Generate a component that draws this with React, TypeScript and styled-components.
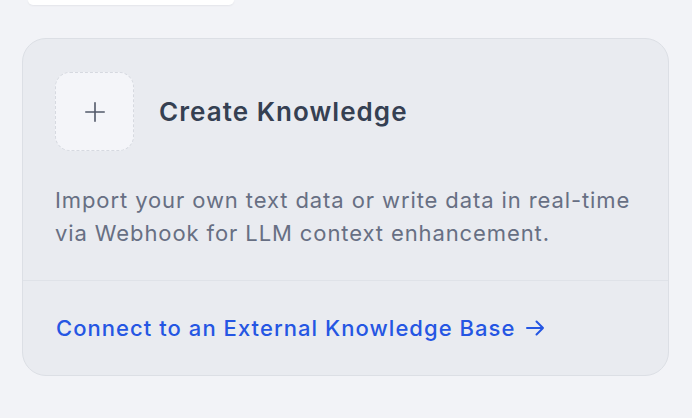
import React from "react";
import styled, { createGlobalStyle } from "styled-components";

const GlobalStyle = createGlobalStyle`
  html, body {
    margin: 0;
    padding: 0;
    background: #f2f3f7;
    font-family: Inter, "Noto Sans", sans-serif;
    -webkit-font-smoothing: antialiased;
  }
`;

const Page = styled.div`
  width: 692px;
  height: 418px;
  box-sizing: border-box;
  padding: 0 23px 0 22px;
  display: flex;
  flex-direction: column;
  gap: 33px;
  overflow: hidden;
`;

const PrevCard = styled.div`
  margin-left: 6px;
  width: 206px;
  height: 5px;
  background: #ffffff;
  border-radius: 0 0 12px 12px;
  box-shadow: 0 1px 2px rgba(16, 24, 40, 0.06);
`;

const Card = styled.div`
  height: 338px;
  box-sizing: border-box;
  background: #e9ebf0;
  border: 1px solid #dcdfe5;
  border-radius: 24px;
  display: flex;
  flex-direction: column;
`;

const Body = styled.div`
  padding: 33px 32px 30px 32px;
  display: flex;
  flex-direction: column;
  gap: 33px;
`;

const Header = styled.div`
  display: flex;
  align-items: center;
  gap: 25px;
`;

const IconBox = styled.div`
  width: 79px;
  height: 79px;
  box-sizing: border-box;
  border: 1.5px dashed #d6d9e0;
  border-radius: 15px;
  background: #f4f5f9;
  display: flex;
  align-items: center;
  justify-content: center;
  color: #525969;
`;

const Title = styled.div`
  font-size: 26px;
  font-weight: 600;
  color: #354052;
  letter-spacing: 1.05px;
`;

const Description = styled.p`
  margin: 0;
  font-size: 22px;
  line-height: 33px;
  color: #676f83;
  letter-spacing: 0.9px;
  white-space: nowrap;
`;

const Footer = styled.div`
  flex: 1;
  border-top: 1px solid #dfe2e8;
  display: flex;
  align-items: center;
  padding: 0 33px;
`;

const LinkText = styled.a`
  display: inline-flex;
  align-items: center;
  gap: 10px;
  font-size: 22px;
  font-weight: 500;
  color: #2556e3;
  letter-spacing: 1.05px;
  text-decoration: none;
  cursor: pointer;
`;

export default function App() {
  return (
    <>
      <GlobalStyle />
      <Page>
        <PrevCard />
        <Card>
          <Body>
            <Header>
              <IconBox>
                <svg width="24" height="24" viewBox="0 0 24 24" fill="none" stroke="currentColor" strokeWidth="1.6" strokeLinecap="round">
                  <path d="M12 2.8v18.4M2.8 12h18.4" />
                </svg>
              </IconBox>
              <Title>Create Knowledge</Title>
            </Header>
            <Description>
              Import your own text data or write data in real-time
              <br />
              via Webhook for LLM context enhancement.
            </Description>
          </Body>
          <Footer>
            <LinkText>
              Connect to an External Knowledge Base
              <svg width="20" height="20" viewBox="0 0 20 20" fill="none" stroke="currentColor" strokeWidth="2" strokeLinecap="round" strokeLinejoin="round">
                <path d="M2 10h16M11.5 3.5L18 10l-6.5 6.5" />
              </svg>
            </LinkText>
          </Footer>
        </Card>
      </Page>
    </>
  );
}
